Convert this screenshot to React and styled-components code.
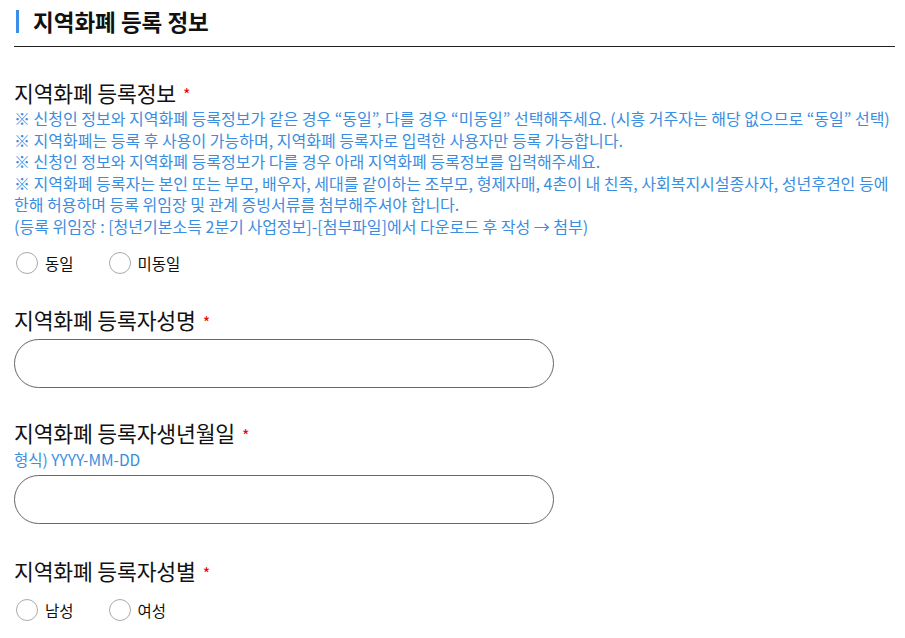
import React from "react";
import styled, { createGlobalStyle } from "styled-components";

const Global = createGlobalStyle`
  html, body { margin: 0; padding: 0; background: #fff; }
  body { font-family: "Noto Sans CJK KR", "Noto Sans", sans-serif; color: #111; }
`;

const Page = styled.div`
  padding: 0 10px 0 14px;
  width: 905px;
  box-sizing: border-box;
`;

const TitleBar = styled.div`
  display: flex;
  align-items: center;
  gap: 14px;
  height: 47px;
  border-bottom: 1px solid #222;
  box-sizing: border-box;
  padding-bottom: 4px;
`;

const Accent = styled.span`
  width: 3px;
  height: 23px;
  margin-left: 2px;
  background: #3d8ee8;
`;

const Title = styled.h2`
  margin: 0;
  font-size: 22.5px;
  font-weight: 700;
  color: #111;
`;

const Section = styled.section`
  display: flex;
  flex-direction: column;
  padding-top: ${(p) => p.$top}px;
`;

const Label = styled.div`
  font-size: 21.6px;
  line-height: 28px;
  letter-spacing: -0.2px;
  color: #111;
  display: flex;
  align-items: center;
`;

const Star = styled.span`
  color: #e00;
  font-size: 16px;
  margin-left: 7px;
  margin-top: 3px;
`;

const Notes = styled.div`
  color: #3a8de0;
  font-size: 16px;
  line-height: 21.6px;
`;

const RadioRow = styled.div`
  display: flex;
  gap: 33px;
  margin-top: ${(p) => p.$top}px;
`;

const RadioItem = styled.label`
  display: flex;
  align-items: center;
  gap: 7px;
  font-size: 15.5px;
  color: #111;
`;

const Circle = styled.span`
  width: 22px;
  height: 22px;
  border: 1px solid #aaa;
  border-radius: 50%;
  margin-left: 2px;
  box-sizing: border-box;
  background: #fff;
`;

const Input = styled.div`
  width: 540px;
  height: 49px;
  border: 1px solid #666;
  border-radius: 25px;
  box-sizing: border-box;
  margin-top: ${(p) => p.$top}px;
`;

const Hint = styled.div`
  color: #3a8de0;
  font-size: 15.5px;
  line-height: 20px;
`;

const Radio = ({ children }) => (
  <RadioItem>
    <Circle />
    {children}
  </RadioItem>
);

export default function App() {
  return (
    <Page>
      <Global />
      <TitleBar>
        <Accent />
        <Title>지역화폐 등록 정보</Title>
      </TitleBar>

      <Section $top={30}>
        <Label>
          지역화폐 등록정보<Star>*</Star>
        </Label>
        <Notes>
          ※ 신청인 정보와 지역화폐 등록정보가 같은 경우 “동일”, 다를 경우 “미동일” 선택해주세요. (시흥 거주자는 해당 없으므로 “동일” 선택)
          <br />※ 지역화폐는 등록 후 사용이 가능하며, 지역화폐 등록자로 입력한 사용자만 등록 가능합니다.
          <br />※ 신청인 정보와 지역화폐 등록정보가 다를 경우 아래 지역화폐 등록정보를 입력해주세요.
          <br />※ 지역화폐 등록자는 본인 또는 부모, 배우자, 세대를 같이하는 조부모, 형제자매, 4촌이 내 친족, 사회복지시설종사자, 성년후견인 등에
          <br />한해 허용하며 등록 위임장 및 관계 증빙서류를 첨부해주셔야 합니다.
          <br />(등록 위임장 : [청년기본소득 2분기 사업정보]-[첨부파일]에서 다운로드 후 작성 → 첨부)
        </Notes>
        <RadioRow $top={14}>
          <Radio>동일</Radio>
          <Radio>미동일</Radio>
        </RadioRow>
      </Section>

      <Section $top={31}>
        <Label>
          지역화폐 등록자성명<Star>*</Star>
        </Label>
        <Input $top={3} />
      </Section>

      <Section $top={30}>
        <Label>
          지역화폐 등록자생년월일<Star>*</Star>
        </Label>
        <Hint>형식) YYYY-MM-DD</Hint>
        <Input $top={6} />
      </Section>

      <Section $top={32}>
        <Label>
          지역화폐 등록자성별<Star>*</Star>
        </Label>
        <RadioRow $top={12}>
          <Radio>남성</Radio>
          <Radio>여성</Radio>
        </RadioRow>
      </Section>
    </Page>
  );
}
